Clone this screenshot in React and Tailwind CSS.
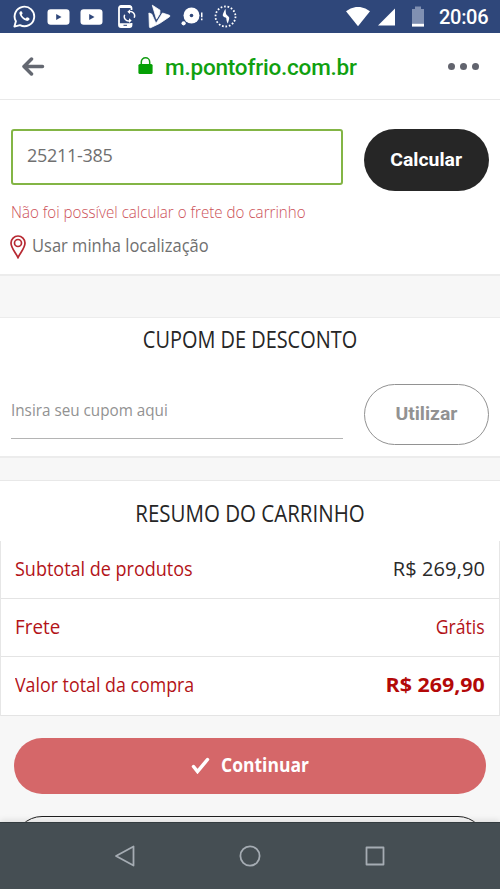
import React from 'react';

const rows = [
  { label: 'Subtotal de produtos', value: 'R$ 269,90', labelStyle: 'scale-x-[.9]', valueStyle: 'text-[#2a2a2a] tracking-[0.1px]' },
  { label: 'Frete', value: 'Grátis', labelStyle: 'scale-x-[.94]', valueStyle: 'text-[#b31318] origin-right scale-x-[.88]' },
  { label: 'Valor total da compra', value: 'R$ 269,90', labelStyle: 'scale-x-[.89]', valueStyle: 'text-[#b30808] font-bold origin-right scale-x-[1.07]' },
];

function WhatsappIcon() {
  return (
    <svg className="h-[23px] w-[23px]" viewBox="0 0 23 23" fill="none">
      <path d="M1.4 21.6l1.5-5.3A9.8 9.8 0 1 1 7 20.2z" stroke="#fff" strokeWidth="1.9" strokeLinejoin="round" />
      <path d="M7.6 6.2c-.9.5-1.4 1.5-1.1 2.6.8 3.2 3.5 6 6.9 7 1.5.4 3-.6 3.2-1.8.1-.7-2-1.9-2.7-1.7-.5.2-.9 1.2-1.4 1.1-1.7-.7-3-1.9-3.7-3.4-.1-.5.7-.9.8-1.4 0-.6-.7-2.1-1.1-2.4z" fill="#fff" />
    </svg>
  );
}

function VideoIcon() {
  return (
    <svg className="h-4 w-[23px]" viewBox="0 0 23 16">
      <rect x=".5" y=".2" width="22" height="15.6" rx="3.2" fill="#fff" />
      <path d="M9.2 4.9v6.2l5.3-3.1z" fill="#2f477a" />
    </svg>
  );
}

function PhoneSyncIcon() {
  return (
    <svg className="h-[23px] w-[18px]" viewBox="0 0 18 23" fill="none">
      <path d="M13.5 5V3a2 2 0 0 0-2-2H3a2 2 0 0 0-2 2v17a2 2 0 0 0 2 2h8.5a2 2 0 0 0 2-2v-2" stroke="#fff" strokeWidth="1.8" />
      <path d="M1 18.3h12.5V22H1zM1 1h12.5v2H1z" fill="#fff" />
      <path d="M5.5 20.3h3.5" stroke="#2f477a" strokeWidth="1" />
      <path d="M11 6.8a4.3 4.3 0 0 1 5.2 5.9M12 15.6a4.3 4.3 0 0 1-5.3-5.9" stroke="#fff" strokeWidth="1.5" />
      <path d="M12 4.5v4.6L9.3 6.8zM11 13.3v4.6l2.7-2.3z" fill="#fff" />
    </svg>
  );
}

function VivaIcon() {
  return (
    <svg className="h-[25px] w-[23px]" viewBox="0 0 23 25" fill="#fff" stroke="#fff" strokeWidth=".8" strokeLinejoin="round">
      <path d="M.9 9l2.8 1L8 19.500 14.500 9l7 2.300c.5.3.5.9.1 1.400L11.500 19.500 3 23.500c-1 .5-1.600.1-1.600-.8z" />
      <path d="M4.3 1.2l7.700 5-.2 3.500-3.300 5.500z" />
    </svg>
  );
}

function DiscIcon() {
  return (
    <svg className="h-5 w-[23px]" viewBox="0 0 23 20">
      <circle cx="10.5" cy="8.5" r="8" fill="#fff" />
      <circle cx="10.5" cy="8.5" r="1.8" fill="#2f477a" />
      <circle cx="2.6" cy="16.3" r="2.1" fill="#fff" />
      <path d="M20 5.5h1.5v4.8H20zM20 11.5h1.5v1.7H20z" fill="#fff" />
    </svg>
  );
}

function DottedClockIcon() {
  return (
    <svg className="h-[23px] w-[23px]" viewBox="0 0 23 23">
      <circle cx="11.5" cy="11.5" r="10" fill="none" stroke="#fff" strokeWidth="1.8" strokeDasharray="1.7 1.79" />
      <path d="M11.3 3.8c-.8 2.5-2.9 5-2.5 7 .4 1.500 3 1.400 3.500 2.400.2 1.500.2 3.500 1.600 5.300.3-2 1.500-4 1.300-5.700-.3-1.600-2.400-2.400-3-3.600-.6-1.400-.2-3.500-.9-5.400z" fill="#fff" />
    </svg>
  );
}

function StatusBar() {
  return (
    <div className="flex h-[33px] items-center bg-[#2f477a] pr-[11px] pl-[13px]">
      <div className="flex items-center">
        <WhatsappIcon />
        <div className="ml-[11px] flex gap-[10px]">
          <VideoIcon />
          <VideoIcon />
        </div>
        <div className="ml-[15px]"><PhoneSyncIcon /></div>
        <div className="ml-[12px]"><VivaIcon /></div>
        <div className="ml-[10px]"><DiscIcon /></div>
        <div className="ml-[10px]"><DottedClockIcon /></div>
      </div>
      <div className="ml-auto flex items-center">
        <svg className="mr-px h-5 w-6" viewBox="0 0 24 20">
          <path d="M0 4.3a18.5 18.5 0 0 1 24 0L12 19.2z" fill="#fff" />
        </svg>
        <svg className="ml-[7px] h-[18px] w-[17px]" viewBox="0 0 17 18">
          <path d="M17 .5v17H0z" fill="#fff" />
        </svg>
        <svg className="ml-[17px] h-[21px] w-3" viewBox="0 0 12 21">
          <path d="M3 .5h6V3h3v17.5H0V3h3z" fill="#8090b2" />
          <path d="M0 17.8h12v2.7H0z" fill="#fff" />
        </svg>
        <span className="ml-[15px] w-[50px] pt-0.5 font-['Roboto'] text-[20px] leading-[31px] font-medium tracking-[-0.3px] whitespace-nowrap text-white">20:06</span>
      </div>
    </div>
  );
}

function BrowserBar() {
  return (
    <div className="flex h-[67px] items-center justify-between border-b border-[#e9e9e9] bg-white pr-[21px] pl-[22px]">
      <svg className="h-[19px] w-[23px]" viewBox="0 0 23 19" fill="none" stroke="#646871" strokeWidth="3.5" strokeLinecap="round" strokeLinejoin="round">
        <path d="M9.5 2L2 9.5 9.5 17M2.5 9.5H20.5" />
      </svg>
      <div className="flex items-center pl-[2px]">
        <svg className="h-[18px] w-[15px]" viewBox="0 0 15 18">
          <path d="M3.3 8V5a4.2 4.2 0 0 1 8.4 0v3" fill="none" stroke="#129c12" strokeWidth="1.5" />
          <rect x=".4" y="7" width="14.2" height="10" rx="1.5" fill="#05a005" />
        </svg>
        <span className="ml-3 w-[192px] pt-0.5 font-['Roboto'] text-[22.5px] leading-8 font-medium tracking-[-0.2px] whitespace-nowrap text-[#10a010]">m.pontofrio.com.br</span>
      </div>
      <div className="flex gap-[5px]">
        <span className="h-[7px] w-[7px] rounded-full bg-[#62646e]" />
        <span className="h-[7px] w-[7px] rounded-full bg-[#62646e]" />
        <span className="h-[7px] w-[7px] rounded-full bg-[#62646e]" />
      </div>
    </div>
  );
}

function Shipping() {
  return (
    <section className="h-[176px] border-b-2 border-[#ececec] bg-white px-[11px] pt-[29px]">
      <div className="flex items-start justify-between">
        <div className="h-14 w-[332px] rounded-[3px] border-2 border-[#83b545] pl-[14px] text-[18px] leading-[49px] tracking-[-0.3px] text-[#707070]">25211-385</div>
        <button className="h-[62px] w-[125px] rounded-full bg-[#262626] font-['Roboto'] text-[19px] leading-[60px] font-bold text-white">
          <span className="inline-block scale-x-[1.02]">Calcular</span>
        </button>
      </div>
      <p className="mt-[9px] origin-left scale-x-[.891] text-[17px] leading-6 font-light whitespace-nowrap text-[#cc5057]">Não foi possível calcular o frete do carrinho</p>
      <div className="mt-[7px] flex items-center">
        <svg className="-ml-px mt-1 h-6 w-4" viewBox="0 0 16 24" fill="none" stroke="#b72932" strokeWidth="1.7">
          <path d="M8 22.5C5.5 17.5 1 13 1 8a7 7 0 0 1 14 0c0 5-4.5 9.5-7 14.5z" />
          <circle cx="8" cy="8" r="3.5" />
        </svg>
        <span className="ml-[6px] origin-left scale-x-[.917] text-[18px] leading-6 whitespace-nowrap text-[#707070]">Usar minha localização</span>
      </div>
    </section>
  );
}

function Coupon() {
  return (
    <section className="mt-[41px] h-[141px] border-t border-b-2 border-[#ececec] bg-white px-[11px]">
      <h2 className="scale-x-[.866] pt-[5px] text-center text-[23px] leading-8 whitespace-nowrap text-[#262626]">CUPOM DE DESCONTO</h2>
      <div className="mt-[29px] flex items-start justify-between">
        <div className="h-[55px] w-[332px] border-b border-[#b4b4b4] text-[17px] leading-[52px] text-[#929292]">
          <span className="inline-block origin-left scale-x-[.897]">Insira seu cupom aqui</span>
        </div>
        <button className="h-[61px] w-[125px] rounded-full border border-[#929292] pb-0.5 font-['Roboto'] text-[19px] leading-[55px] font-bold text-[#929292]">
          <span className="inline-block scale-x-[1.02]">Utilizar</span>
        </button>
      </div>
    </section>
  );
}

function Summary() {
  return (
    <section className="mt-[22px] border-t border-[#e8e8e8] bg-white">
      <h2 className="h-[60px] scale-x-[.891] pt-[16px] text-center text-[23px] leading-8 whitespace-nowrap text-[#262626]">RESUMO DO CARRINHO</h2>
      <div className="border-x border-[#e6e6e6]">
        {rows.map((row) => (
          <div key={row.label} className="flex h-[58.2px] justify-between border-b border-[#e4e4e4] px-[14px] text-[20px] leading-[55px] whitespace-nowrap">
            <span className={`origin-left text-[#b31318] ${row.labelStyle}`}>{row.label}</span>
            <span className={row.valueStyle}>{row.value}</span>
          </div>
        ))}
      </div>
    </section>
  );
}

function NavigationBar() {
  return (
    <nav className="z-10 flex h-[67px] items-center justify-around border-t border-[#343c40] bg-[#454e53] shadow-[0_-2px_6px_rgba(0,0,0,0.1)]">
      <svg className="ml-[62px] h-6 w-6" viewBox="0 0 24 24" fill="none" stroke="#a5acb3" strokeWidth="1.8" strokeLinejoin="round">
        <path d="M20.5 2.5v19L3 12z" />
      </svg>
      <svg className="h-6 w-6" viewBox="0 0 24 24" fill="none" stroke="#a5acb3" strokeWidth="1.8">
        <circle cx="12" cy="12" r="9.6" />
      </svg>
      <svg className="mr-[62px] h-6 w-6" viewBox="0 0 24 24" fill="none" stroke="#a5acb3" strokeWidth="1.8" strokeLinejoin="round">
        <path d="M3.5 3.5h17v17h-17z" />
      </svg>
    </nav>
  );
}

export default function App() {
  return (
    <div className="flex h-[889px] w-[500px] flex-col overflow-hidden bg-[#f7f7f7] font-['Open_Sans',sans-serif]">
      <StatusBar />
      <BrowserBar />
      <Shipping />
      <Coupon />
      <Summary />
      <main className="flex min-h-0 flex-1 flex-col overflow-hidden px-[14px] pt-[22.4px]">
        <button className="flex h-14 shrink-0 items-center rounded-full bg-[#d56769] pl-[177px] text-[20px] leading-[53px] font-bold text-white">
          <svg className="mr-[11px] h-[17px] w-[19px]" viewBox="0 0 19 17" fill="none" stroke="#fff" strokeWidth="3.5" strokeLinecap="round">
            <path d="M2.5 9.5l4 5L16.5 2.5" />
          </svg>
          <span className="origin-left scale-x-[.875] pb-[3px]">Continuar</span>
        </button>
        <div className="mt-[22px] h-14 shrink-0 rounded-full border border-[#202020]" />
      </main>
      <NavigationBar />
    </div>
  );
}
